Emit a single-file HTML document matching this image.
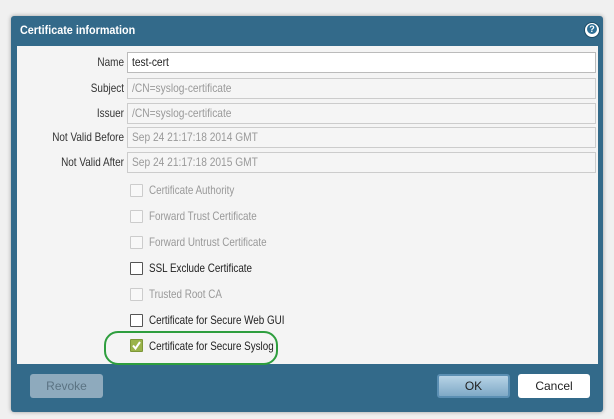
<!DOCTYPE html>
<html><head><style>
*{margin:0;padding:0;box-sizing:border-box}
body{width:614px;height:419px;background:#f0f0f0;font-family:"Liberation Sans",sans-serif;font-size:12px;color:#333;position:relative;overflow:hidden}
.dlg{position:absolute;left:11px;top:16px;width:592px;height:396px;background:#336a8a;border-radius:3px;box-shadow:0 0 4px rgba(0,0,0,.35)}
.title{position:absolute;left:20px;top:23px;color:#fff;font-weight:bold;font-size:12px;transform:scaleX(0.9);transform-origin:left}
.help{position:absolute;left:585px;top:23px;width:14px;height:14px;border-radius:50%;background:#fff;border:2px solid #fff;box-shadow:0 0 0 1px #1d4c66}
.help::after{content:"?";position:absolute;left:0;top:-1px;width:10px;height:10px;border-radius:50%;background:#2d6f95;color:#fff;font-size:9px;font-weight:bold;text-align:center;line-height:11px}
.body{position:absolute;left:17px;top:46px;width:581px;height:318px;background:#f4f4f4}
.lbl{position:absolute;left:0;width:124px;text-align:right;color:#333;transform:scaleX(0.83);transform-origin:right;white-space:nowrap}
.inp{position:absolute;left:127px;width:469px;height:21px;border:1px solid #ccc;background:#f5f5f5;color:#999;padding:2px 4px;font-size:12px}
.inp span{display:inline-block;transform:scaleX(0.85);transform-origin:left;white-space:nowrap}
.inp.a{background:#fff;color:#222;border-color:#bbb}
.cb{position:absolute;left:130px;width:13px;height:13px;border:1px solid #ccc;background:#f8f8f8;border-radius:1px}
.cb.a{border-color:#555;background:#fff}
.cl{position:absolute;left:149px;color:#999;transform:scaleX(0.82);transform-origin:left;white-space:nowrap}
.cl.a{color:#222}
.btn{position:absolute;top:374px;height:24px;border-radius:3px;text-align:center;line-height:24px;font-size:12px}
</style></head><body>
<div class="dlg"></div>
<div class="title">Certificate information</div>
<div class="help"></div>
<div class="body"></div>

<div class="lbl" style="top:55px">Name</div><div class="inp a" style="top:52px"><span>test-cert</span></div>
<div class="lbl" style="top:81px">Subject</div><div class="inp" style="top:78px"><span>/CN=syslog-certificate</span></div>
<div class="lbl" style="top:106px">Issuer</div><div class="inp" style="top:103px"><span>/CN=syslog-certificate</span></div>
<div class="lbl" style="top:130px">Not Valid Before</div><div class="inp" style="top:127px"><span>Sep 24 21:17:18 2014 GMT</span></div>
<div class="lbl" style="top:155px">Not Valid After</div><div class="inp" style="top:152px"><span>Sep 24 21:17:18 2015 GMT</span></div>

<div class="cb" style="top:184px"></div><div class="cl" style="top:183px">Certificate Authority</div>
<div class="cb" style="top:210px"></div><div class="cl" style="top:209px">Forward Trust Certificate</div>
<div class="cb" style="top:236px"></div><div class="cl" style="top:235px">Forward Untrust Certificate</div>
<div class="cb a" style="top:262px"></div><div class="cl a" style="top:261px">SSL Exclude Certificate</div>
<div class="cb" style="top:288px"></div><div class="cl" style="top:287px">Trusted Root CA</div>
<div class="cb a" style="top:314px"></div><div class="cl a" style="top:313px">Certificate for Secure Web GUI</div>
<div class="cb" style="top:339px;background:#9ab34a;border-color:#7d9738"><svg width="11" height="11" viewBox="0 0 11 11" style="position:absolute;left:0;top:0"><path d="M2 5.5 L4.5 8.5 L9 2" stroke="#fff" stroke-width="2" fill="none"/></svg></div>
<div class="cl a" style="top:339px">Certificate for Secure Syslog</div>
<div style="position:absolute;left:104px;top:331px;width:174px;height:34px;border:2px solid #2e9e3e;border-radius:14px"></div>

<div class="btn" style="left:30px;width:73px;background:#8eaabd;color:#5b7383">Revoke</div>
<div class="btn" style="left:437px;width:73px;background:linear-gradient(#b7d3e6,#7fa9c6);border:2px solid #5b8fb3;color:#222;line-height:20px">OK</div>
<div class="btn" style="left:518px;width:72px;background:#fff;color:#222">Cancel</div>
</body></html>
